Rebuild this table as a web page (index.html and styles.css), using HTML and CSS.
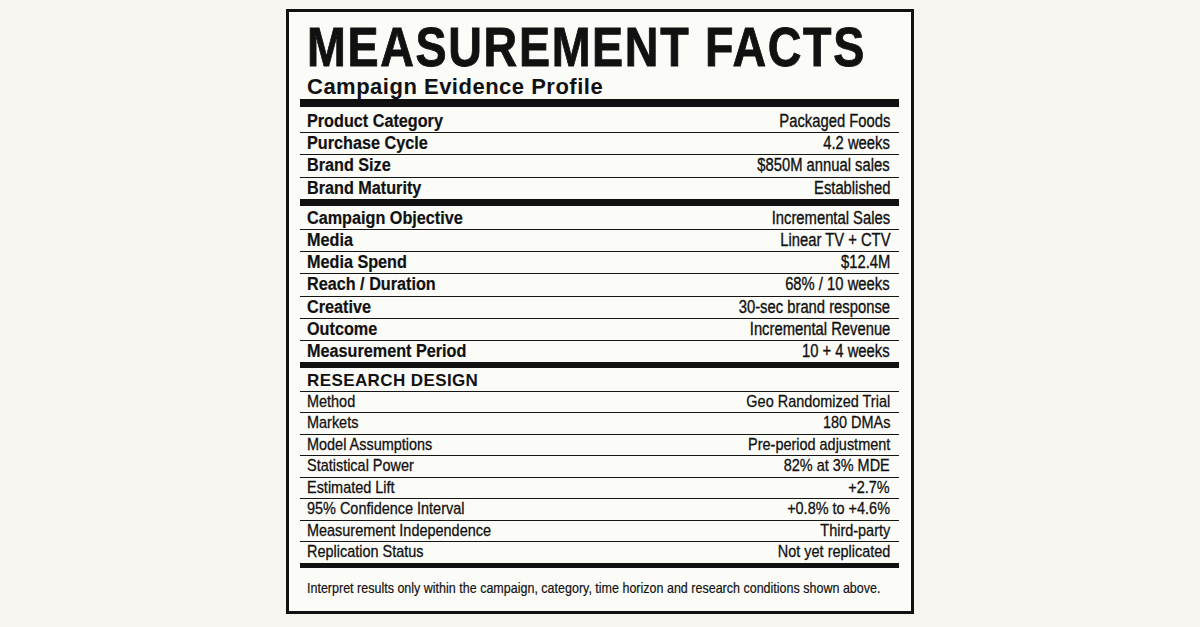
FILE: index.html
```html
<!DOCTYPE html>
<html lang="en">
<head>
<meta charset="utf-8">
<title>Measurement Facts</title>
<link rel="stylesheet" href="styles.css">
</head>
<body>
<main class="label">
  <h1 class="title"><span class="cond">MEASUREMENT FACTS</span></h1>
  <h2 class="subtitle">Campaign Evidence Profile</h2>
  <div class="bar bar-8"></div>

  <section class="group group-1">
    <div class="row"><span class="k">Product Category</span><span class="v">Packaged Foods</span></div>
    <div class="row"><span class="k">Purchase Cycle</span><span class="v">4.2 weeks</span></div>
    <div class="row"><span class="k">Brand Size</span><span class="v">$850M annual sales</span></div>
    <div class="row"><span class="k">Brand Maturity</span><span class="v">Established</span></div>
  </section>
  <div class="bar bar-7"></div>

  <section class="group group-2">
    <div class="row"><span class="k">Campaign Objective</span><span class="v">Incremental Sales</span></div>
    <div class="row"><span class="k">Media</span><span class="v">Linear TV + CTV</span></div>
    <div class="row"><span class="k">Media Spend</span><span class="v">$12.4M</span></div>
    <div class="row"><span class="k">Reach / Duration</span><span class="v">68% / 10 weeks</span></div>
    <div class="row"><span class="k">Creative</span><span class="v">30-sec brand response</span></div>
    <div class="row"><span class="k">Outcome</span><span class="v">Incremental Revenue</span></div>
    <div class="row"><span class="k">Measurement Period</span><span class="v">10 + 4 weeks</span></div>
  </section>
  <div class="bar bar-6"></div>

  <section class="group group-3">
    <div class="row head"><span class="h">RESEARCH DESIGN</span></div>
    <div class="row"><span class="k">Method</span><span class="v">Geo Randomized Trial</span></div>
    <div class="row"><span class="k">Markets</span><span class="v">180 DMAs</span></div>
    <div class="row"><span class="k">Model Assumptions</span><span class="v">Pre-period adjustment</span></div>
    <div class="row"><span class="k">Statistical Power</span><span class="v">82% at 3% MDE</span></div>
    <div class="row"><span class="k">Estimated Lift</span><span class="v">+2.7%</span></div>
    <div class="row"><span class="k">95% Confidence Interval</span><span class="v">+0.8% to +4.6%</span></div>
    <div class="row"><span class="k">Measurement Independence</span><span class="v">Third-party</span></div>
    <div class="row"><span class="k">Replication Status</span><span class="v">Not yet replicated</span></div>
  </section>
  <div class="bar bar-5"></div>

  <p class="note"><span class="cond">Interpret results only within the campaign, category, time horizon and research conditions shown above.</span></p>
</main>
</body>
</html>
```

FILE: styles.css
```css
html, body {
  margin: 0;
  padding: 0;
}

body {
  background: #f6f5f0;
  color: #111;
  font-family: "Liberation Sans", Arial, sans-serif;
}

.label {
  box-sizing: border-box;
  width: 628px;
  margin: 9px auto 0;
  border: 3px solid #111;
  background: #fbfbf8;
  padding: 7px 12px 14px 11px;
}

.title {
  margin: 0;
  padding-left: 7px;
  font-family: "Liberation Sans", Arial, sans-serif;
  font-weight: 700;
  font-size: 56px;
  line-height: 56px;
  white-space: nowrap;
}
.title .cond {
  display: inline-block;
  letter-spacing: 2px;
  -webkit-text-stroke: 0.9px #111;
  transform: scaleX(0.832);
  transform-origin: 0 50%;
}

.subtitle {
  margin: 0;
  padding-left: 7px;
  font-family: "Liberation Sans", Arial, sans-serif;
  font-weight: 700;
  font-size: 22px;
  line-height: 24px;
  letter-spacing: 0.5px;
}

.bar {
  background: #111;
}
.bar-8 { height: 8px; }
.bar-7 { height: 7px; }
.bar-6 { height: 6px; }
.bar-5 { height: 5px; }

.group {
  display: flex;
  flex-direction: column;
}
.group-1 { padding-top: 4px; }
.group-2 { padding-top: 2px; }

.row {
  display: flex;
  justify-content: space-between;
  align-items: baseline;
  padding: 0 9px 0 7px;
  border-bottom: 1px solid #151515;
  white-space: nowrap;
}
.row:last-child {
  border-bottom: 0;
}

.group-1 .row,
.group-2 .row {
  height: 21.2px;
  line-height: 21px;
}

.k {
  display: inline-block;
  font-weight: 700;
  font-size: 18px;
  -webkit-text-stroke: 0.2px #111;
  transform: scaleX(0.9);
  transform-origin: 0 50%;
}

.v {
  display: inline-block;
  font-weight: 400;
  font-size: 17.5px;
  -webkit-text-stroke: 0.35px #111;
  transform: scaleX(0.845);
  transform-origin: 100% 50%;
}

.group-3 .row {
  height: 20.5px;
  line-height: 20.5px;
}
.group-3 .k {
  font-weight: 400;
  font-size: 17px;
  -webkit-text-stroke: 0.3px #111;
  transform: scaleX(0.85);
}
.group-3 .v {
  font-size: 17px;
  -webkit-text-stroke: 0.3px #111;
  transform: scaleX(0.85);
}

.group-3 .row.head {
  height: 20px;
  line-height: 20px;
  padding-top: 2.5px;
}
.h {
  font-weight: 700;
  font-size: 17px;
  letter-spacing: 0.4px;
}

.note {
  margin: 11px 0 0;
  padding-left: 7px;
  font-size: 15px;
  line-height: 18px;
  white-space: nowrap;
}
.note .cond {
  display: inline-block;
  -webkit-text-stroke: 0.2px #111;
  transform: scaleX(0.834);
  transform-origin: 0 50%;
}
```
